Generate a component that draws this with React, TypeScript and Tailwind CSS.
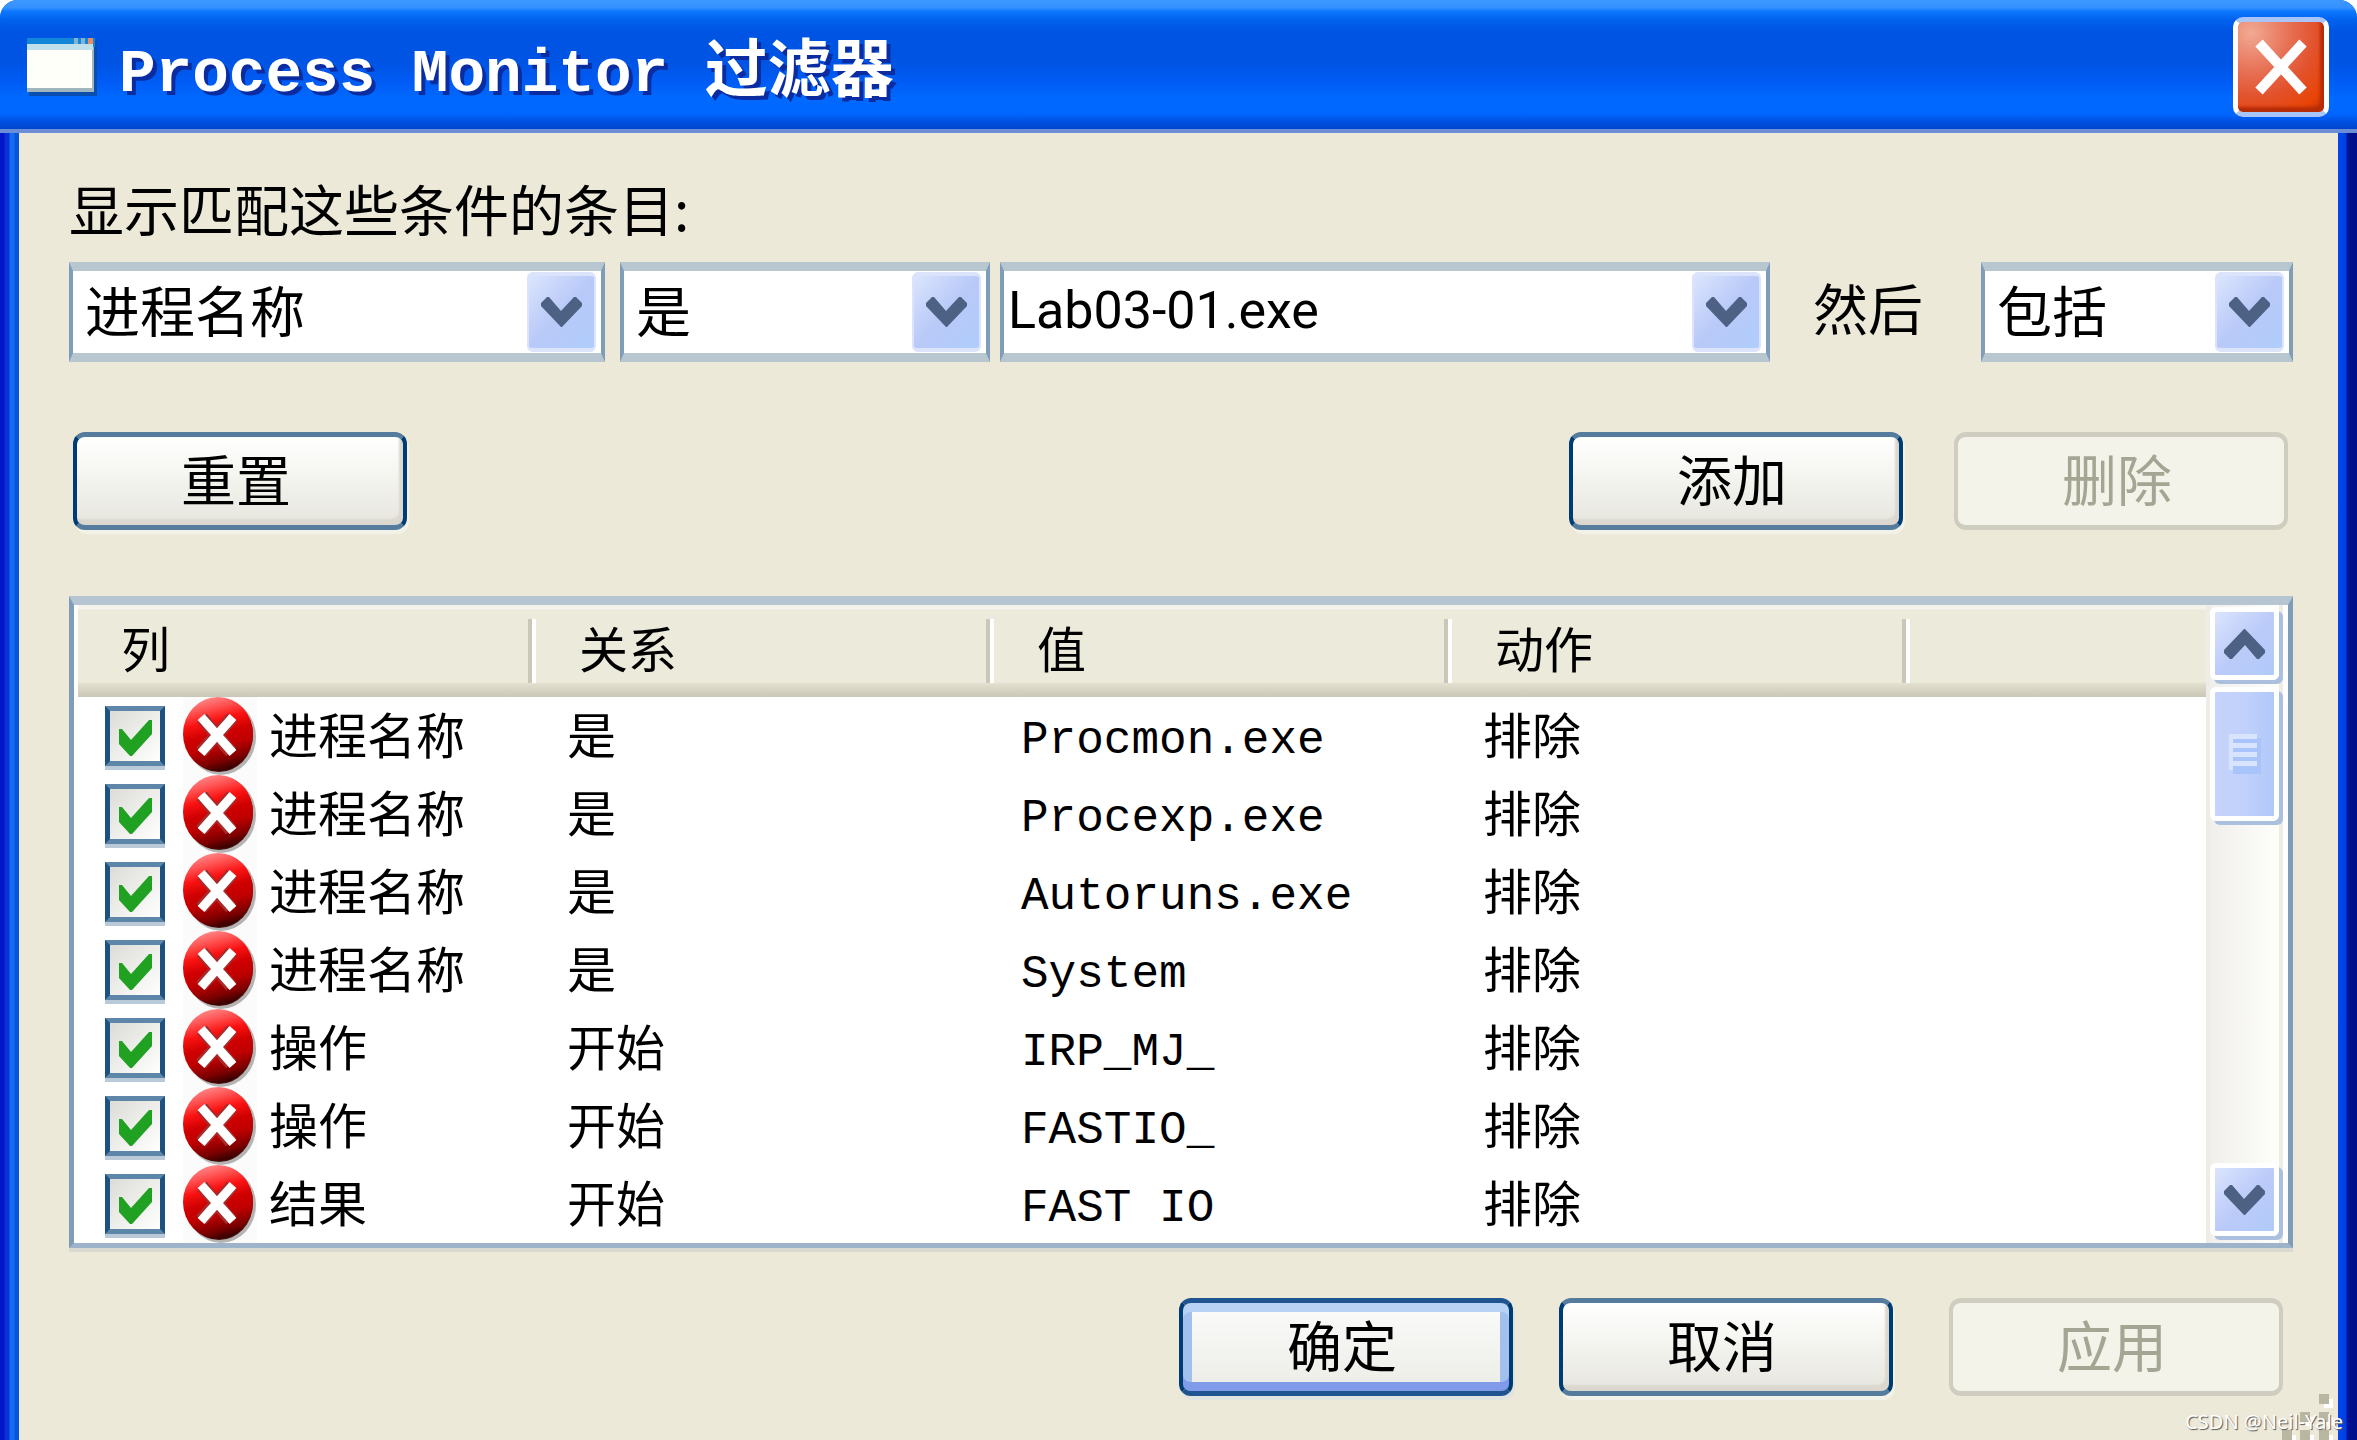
import React, { useState } from 'react';

type FilterRule = {
    id: number;
    column: string;
    relation: string;
    value: string;
    action: string;
};

const rules: FilterRule[] = [
    { id: 1, column: '进程名称', relation: '是', value: 'Procmon.exe', action: '排除' },
    { id: 2, column: '进程名称', relation: '是', value: 'Procexp.exe', action: '排除' },
    { id: 3, column: '进程名称', relation: '是', value: 'Autoruns.exe', action: '排除' },
    { id: 4, column: '进程名称', relation: '是', value: 'System', action: '排除' },
    { id: 5, column: '操作', relation: '开始', value: 'IRP_MJ_', action: '排除' },
    { id: 6, column: '操作', relation: '开始', value: 'FASTIO_', action: '排除' },
    { id: 7, column: '结果', relation: '开始', value: 'FAST IO', action: '排除' },
];

const headers = ['列', '关系', '值', '动作'];

const Chevron: React.FC<{ up?: boolean }> = ({ up }) => (
    <svg viewBox="0 0 41 30" className={up ? 'h-[30px] w-[41px] rotate-180' : 'h-[30px] w-[41px]'} aria-hidden="true">
        <path fill="#4d6185" d="M6 0h2L20 14L33 0h2L41 6v3L21 30h-1L0 9V6z" />
    </svg>
);

const CheckMark: React.FC = () => (
    <svg
        viewBox="0 0 33 36"
        className="pointer-events-none absolute top-[14px] left-[14px] h-[36px] w-[33px]"
        aria-hidden="true"
    >
        <path fill="#21a121" d="M33 0V14L13 36H11L0 24V9H3L12 20L30 0z" />
    </svg>
);

const ExcludeIcon: React.FC = () => (
    <svg viewBox="0 0 74 78" className="h-[78px] w-[74px] shrink-0" aria-hidden="true">
        <defs>
            <linearGradient id="ball" x1="0.35" y1="0" x2="0.6" y2="1">
                <stop offset="0" stopColor="#ff8a8a" />
                <stop offset="0.16" stopColor="#ff5050" />
                <stop offset="0.32" stopColor="#fa1212" />
                <stop offset="0.5" stopColor="#cf0000" />
                <stop offset="0.66" stopColor="#c00000" />
                <stop offset="0.86" stopColor="#7c0000" />
                <stop offset="1" stopColor="#2c0000" />
            </linearGradient>
        </defs>
        <rect width="74" height="78" fill="#fbfbfb" />
        <ellipse cx="38" cy="40" rx="35" ry="38" fill="#b4b4b4" />
        <ellipse cx="36" cy="38" rx="34" ry="37" fill="#4a1010" />
        <ellipse cx="35" cy="37" rx="35" ry="37" fill="url(#ball)" />
        <path d="M19 21L48 55M49 21L18 55" stroke="#a82a2a" strokeWidth="13" />
        <path d="M18 20L50 56M50 20L18 56" stroke="#ffffff" strokeWidth="9" />
    </svg>
);

const DropArrow: React.FC = () => (
    <span className="pointer-events-none flex h-[80px] w-[69px] items-center justify-center rounded-[6px] border-x-2 border-y-4 border-[#dbe4fb] bg-linear-to-br from-[#dbe5fd] via-[#b9c9f8] to-[#afcdfb]">
        <Chevron />
    </span>
);

const fieldFrame =
    'relative h-[100px] border-x-4 border-y-[9px] border-x-[#7f9db9] border-y-[#b8c7cf] bg-white';

const SelectField: React.FC<{ id: string; label?: string; value: string; className: string }> = ({
    id,
    label,
    value,
    className,
}) => (
    <div className={`${fieldFrame} ${className}`}>
        <select
            id={id}
            aria-label={label}
            className="h-full w-full appearance-none bg-transparent pb-2 pl-3 text-[55px] leading-[74px] text-black outline-none"
        >
            <option>{value}</option>
        </select>
        <span className="pointer-events-none absolute top-px right-[5px]">
            <DropArrow />
        </span>
    </div>
);

const DialogButton: React.FC<{ label: string; primary?: boolean; disabled?: boolean }> = ({
    label,
    primary,
    disabled,
}) => {
    let look =
        'border-x-[#003c74] border-y-[#557c9c] bg-linear-to-b from-white via-[#f3f3ee] to-[#e6e5de] text-black shadow-[inset_-4px_-6px_2px_#dcd8cf,2px_4px_0_#f3f2e8]';
    if (primary) {
        look =
            'border-x-[#003c74] border-y-[#1f5490] bg-linear-to-b from-[#fbfbfb] to-[#ecede6] text-black shadow-[inset_0_9px_0_#b7d2f4,inset_0_-9px_0_#7f9bea,inset_9px_0_0_#a2c0ee,inset_-9px_0_0_#a2c0ee,2px_4px_0_#e0e4e0]';
    }
    if (disabled) {
        look = 'border-[#cfcdbf] bg-[#f4f3ea] text-[#a5a593]';
    }
    return (
        <button
            type="button"
            disabled={disabled}
            className={`h-[98px] w-[334px] shrink-0 rounded-[12px] border-x-4 border-y-[5px] pr-2 pb-2 text-[55px] leading-[80px] ${look}`}
        >
            {label}
        </button>
    );
};

const TitleBar: React.FC = () => (
    <header className="flex h-[133px] items-center justify-between border-b-4 border-[#6c8ed6] bg-[linear-gradient(180deg,#3d98ff_0,#3390ff_8px,#0f78ff_11px,#0062ee_20px,#0054e3_32px,#0054e3_62px,#005cf5_82px,#0069ff_98px,#0066ff_114px,#0050e0_122px,#0044cc_129px)] pt-1 pr-7 pl-[27px]">
        <div className="flex items-center gap-[22px]">
            <svg viewBox="0 0 70 58" className="h-[58px] w-[70px]" aria-hidden="true">
                <rect x="2" y="3" width="68" height="55" fill="#0b4fae" />
                <rect width="68" height="9" fill="#1486d8" />
                <rect x="47" width="4" height="9" fill="#7fb4d8" />
                <rect x="54" width="4" height="9" fill="#7fb4d8" />
                <rect x="61" width="5" height="9" fill="#f08a5a" />
                <rect y="9" width="67" height="45" fill="#9fb6bf" />
                <rect y="6" width="66" height="6" fill="#bfe0ea" />
                <rect y="12" width="65" height="38" fill="#fffffa" />
            </svg>
            <h1 className="pt-4 font-['Liberation_Mono','Noto_Sans_CJK_SC',monospace] text-[61px] leading-[80px] font-bold whitespace-pre text-white [text-shadow:4px_4px_0_#0a2ca0]">
                Process Monitor <span className="text-[63px]">过滤器</span>
            </h1>
        </div>
        <button
            type="button"
            aria-label="关闭"
            className="flex h-[100px] w-[96px] items-center justify-center rounded-[10px] border-[5px] border-x-white border-y-[#a9c4f8] bg-[radial-gradient(circle_at_15%_12%,#f2a994_0,#e66e52_38%,#e2522c_60%,#e84406_84%,#c22d02_100%)] shadow-[inset_-4px_-5px_3px_#b52c08]"
        >
            <svg viewBox="0 0 52 56" className="h-[56px] w-[52px]" aria-hidden="true">
                <path d="M4 4L48 52M48 4L4 52" stroke="#ffffff" strokeWidth="10" />
            </svg>
        </button>
    </header>
);

const ScrollButton: React.FC<{ up?: boolean }> = ({ up }) => (
    <button
        type="button"
        aria-label={up ? '向上滚动' : '向下滚动'}
        className="flex h-[73px] w-[69px] items-center justify-center rounded-[6px] border-[5px] border-white bg-linear-to-br from-[#dbe5fd] via-[#bccbf9] to-[#b0cafa] shadow-[4px_4px_0_#abc0df]"
    >
        <Chevron up={up} />
    </button>
);

const ScrollBar: React.FC = () => (
    <div className="flex w-[77px] shrink-0 flex-col border-x-4 border-[#eeede5] bg-linear-to-r from-[#f0efeb] to-[#fefefb] pt-0.5 pb-[7px]">
        <ScrollButton up />
        <div className="mt-[7px] flex h-[134px] w-[69px] items-center justify-center rounded-[6px] border-[5px] border-white bg-linear-to-r from-[#c6d3fb] via-[#c1d1fc] to-[#b0c8f9] shadow-[4px_4px_0_#abc0df]">
            <svg viewBox="0 0 32 40" className="h-[40px] w-[32px]" aria-hidden="true">
                <path d="M4 4h28v36h-28z" fill="#a9c4fa" />
                <path d="M0 0h28v5h-28zM0 9h28v5h-28zM0 18h28v5h-28zM0 27h28v5h-28z" fill="#d8e4fd" />
                <path d="M0 0h4v36h-4z" fill="#d8e4fd" />
            </svg>
        </div>
        <div className="flex-1" />
        <ScrollButton />
    </div>
);

const RuleTable: React.FC = () => {
    const [disabledIds, setDisabledIds] = useState<number[]>([]);

    const toggle = (id: number) => {
        setDisabledIds((ids) => (ids.includes(id) ? ids.filter((i) => i !== id) : [...ids, id]));
    };

    return (
        <div className="mt-[66px] flex border-x-[5px] border-t-[9px] border-b-[5px] border-x-[#7f9db9] border-t-[#b5c5d2] border-b-[#9db3ca] bg-white pr-[5px] pl-1 shadow-[0_4px_0_#d8d9d0]">
            <table className="min-w-0 flex-1 table-fixed border-collapse text-[49px] leading-[56px] text-black">
                <colgroup>
                    <col className="w-[458px]" />
                    <col className="w-[458px]" />
                    <col className="w-[458px]" />
                    <col className="w-[458px]" />
                    <col />
                </colgroup>
                <thead>
                    <tr className="h-[92px] bg-[linear-gradient(180deg,#f4f3ec_0,#f4f3ec_4px,#ebeadb_5px,#ebeadb_77px,#e2decd_79px,#d6d2c2_86px,#cbc7b8_92px)]">
                        {headers.map((name) => (
                            <th key={name} className="p-0 text-left font-normal">
                                <div className="flex h-[64px] items-center border-r-4 border-white pb-2 pl-[43px] shadow-[inset_-4px_0_0_#cac7b8]">
                                    {name}
                                </div>
                            </th>
                        ))}
                        <th className="p-0" />
                    </tr>
                </thead>
                <tbody>
                    {rules.map((rule) => (
                        <tr key={rule.id} className="h-[78px]">
                            <td className="p-0">
                                <label className="flex h-[78px] items-center pl-[27px]">
                                    <span className="relative mr-[18px] h-[60px] w-[60px] shrink-0">
                                        <input
                                            type="checkbox"
                                            checked={!disabledIds.includes(rule.id)}
                                            onChange={() => toggle(rule.id)}
                                            className="block h-[60px] w-[60px] appearance-none border-[5px] border-x-[#1c5180] border-y-[#5e86a9] bg-linear-to-br from-[#dcdcd7] to-white shadow-[0_4px_0_#b9c9d8]"
                                        />
                                        {!disabledIds.includes(rule.id) && <CheckMark />}
                                    </span>
                                    <ExcludeIcon />
                                    <span className="pb-1.5 pl-3">{rule.column}</span>
                                </label>
                            </td>
                            <td className="p-0 pb-1.5 pl-[31px]">{rule.relation}</td>
                            <td className="p-0 pt-2.5 pl-[27px] font-['Liberation_Mono',monospace] text-[46px]">
                                {rule.value}
                            </td>
                            <td className="p-0 pb-1.5 pl-[31px]">{rule.action}</td>
                            <td className="p-0" />
                        </tr>
                    ))}
                </tbody>
            </table>
            <ScrollBar />
        </div>
    );
};

const ResizeGrip: React.FC = () => (
    <svg viewBox="0 0 56 46" className="absolute right-0 bottom-0 h-[46px] w-[56px]" aria-hidden="true">
        <path
            d="M42 5h9v9h-9zM23 23h9v9h-9zM42 23h9v9h-9zM5 41h9v9h-9zM23 41h9v9h-9zM42 41h9v9h-9z"
            fill="#ffffff"
        />
        <path
            d="M37 0h10v10h-10zM18 18h10v10h-10zM37 18h10v10h-10zM0 36h10v10h-10zM18 36h10v10h-10zM37 36h10v10h-10z"
            fill="#b9b6a2"
        />
    </svg>
);

export default function App() {
    const [path, setPath] = useState('Lab03-01.exe');

    return (
        <div className="bg-white font-['Noto_Sans_CJK_SC',sans-serif]">
            <div className="relative flex min-h-screen flex-col overflow-hidden rounded-t-[18px] bg-[#0054e3]">
                <TitleBar />
                <div className="flex flex-1 bg-[linear-gradient(90deg,#0016c8_0,#0016c8_4px,#0a30d8_5px,#0a30d8_9px,#156cf0_10px,#156cf0_14px,#0855dd_15px,#0855dd_19px,transparent_19px),linear-gradient(270deg,#000f8c_0,#000f8c_8px,#0016ac_10px,#003fe0_11px,#0046ee_19px)] px-[19px]">
                    <main className="relative min-w-0 flex-1 bg-[#ece9d8] pt-[42px] pr-[45px] pb-[42px] pl-[50px]">
                        <label htmlFor="column" className="block text-[55px] leading-[64px] text-black">
                            显示匹配这些条件的条目:
                        </label>

                        <div className="mt-[23px] flex items-center">
                            <SelectField id="column" value="进程名称" className="w-[536px]" />
                            <SelectField id="relation" label="关系" value="是" className="ml-[15px] w-[370px]" />
                            <div className={`${fieldFrame} ml-[10px] flex min-w-0 flex-1 items-center pr-[5px]`}>
                                <input
                                    type="text"
                                    aria-label="值"
                                    value={path}
                                    onChange={(e) => setPath(e.target.value)}
                                    className="h-full min-w-0 flex-1 bg-transparent pb-1 pl-1 font-['Roboto',sans-serif] text-[52px] leading-[76px] text-black outline-none"
                                />
                                <DropArrow />
                            </div>
                            <label
                                htmlFor="action"
                                className="w-[211px] pb-3 pl-[43px] text-[55px] leading-[64px] text-black"
                            >
                                然后
                            </label>
                            <SelectField id="action" value="包括" className="w-[312px]" />
                        </div>

                        <div className="mt-[70px] flex items-center justify-between pr-[5px] pl-1">
                            <DialogButton label="重置" />
                            <div className="flex gap-[51px]">
                                <DialogButton label="添加" />
                                <DialogButton label="删除" disabled />
                            </div>
                        </div>

                        <RuleTable />

                        <div className="mt-[50px] flex justify-end gap-14 pr-[10px]">
                            <div className="flex gap-[46px]">
                                <DialogButton label="确定" primary />
                                <DialogButton label="取消" />
                            </div>
                            <DialogButton label="应用" disabled />
                        </div>

                        <ResizeGrip />
                    </main>
                </div>
                <p className="absolute right-[14px] bottom-1 font-['Noto_Sans',sans-serif] text-[20px] leading-7 text-white [text-shadow:1px_1px_1px_#555555]">
                    CSDN @Neil-Yale
                </p>
            </div>
        </div>
    );
}
